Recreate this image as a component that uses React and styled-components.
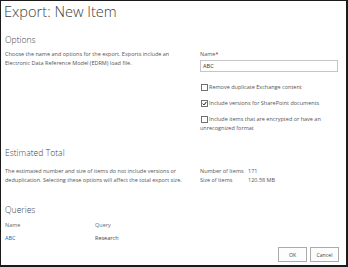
import React from 'react';
import styled, { createGlobalStyle } from 'styled-components';

const GlobalStyle = createGlobalStyle`
  html, body {
    margin: 0;
    padding: 0;
    background: #ffffff;
  }
`;

const Frame = styled.div`
  width: 348px;
  height: 267px;
  box-sizing: border-box;
  border: 1px solid #1b1b1b;
  border-right-width: 2px;
  border-bottom-width: 2px;
  padding: 0 7px 3px 4px;
  display: flex;
  flex-direction: column;
  background: #ffffff;
  font-family: "Open Sans", "Noto Sans", sans-serif;
  color: #555555;
  overflow: hidden;
`;

const Title = styled.h1`
  margin: 0 0 0 -1px;
  font-size: 14.6px;
  line-height: 20px;
  font-weight: 300;
  color: #3c3c3c;
  white-space: nowrap;
`;

const Heading = styled.h2`
  margin: ${(p) => p.$top}px 0 0;
  font-size: 8.6px;
  line-height: 10px;
  font-weight: 300;
  color: #444444;
`;

const Row = styled.div`
  margin-top: ${(p) => p.$top}px;
  display: grid;
  grid-template-columns: 195px 138px;
  align-items: start;
`;

const Text = styled.p`
  margin: 0;
  width: 186px;
  font-size: 5.5px;
  line-height: 9px;
`;

const Field = styled.div`
  display: flex;
  flex-direction: column;
`;

const Label = styled.label`
  font-size: 5.5px;
  line-height: 9px;
  color: #555555;
`;

const Star = styled.span`
  color: #c00000;
`;

const Input = styled.div`
  margin-top: 1px;
  height: 12px;
  box-sizing: border-box;
  border: 1px solid #c6c6c6;
  padding: 0 2px;
  font-size: 5.6px;
  line-height: 10px;
  color: #333333;
`;

const Options = styled.div`
  margin-top: 11px;
  display: flex;
  flex-direction: column;
  gap: 7px;
`;

const Option = styled.div`
  font-size: 5.5px;
  line-height: 9px;
  color: #555555;
`;

const Box = styled.span`
  display: inline-block;
  vertical-align: middle;
  position: relative;
  top: -0.5px;
  width: 7px;
  height: 7px;
  box-sizing: border-box;
  margin: 0 1px 0 1px;
  border: 1px solid #707070;
  background: #ffffff;

  svg {
    display: block;
    width: 5px;
    height: 5px;
  }
`;

const Stats = styled.div`
  display: grid;
  grid-template-columns: 48px auto;
  font-size: 5.5px;
  line-height: 9px;
`;

const Table = styled.div`
  margin-top: 6px;
  display: grid;
  grid-template-columns: 90px auto;
  row-gap: 4px;
  font-size: 5.5px;
  line-height: 9px;
`;

const Head = styled.span`
  color: #6a6a6a;
`;

const Link = styled.a`
  color: #0072c6;
  text-decoration: none;
`;

const Cell = styled.span`
  color: #444444;
`;

const Footer = styled.div`
  margin-top: auto;
  display: flex;
  justify-content: flex-end;
  gap: 3px;
`;

const Button = styled.button`
  width: 29px;
  height: 15px;
  padding: 0;
  border: 1px solid #ababab;
  background: #fdfdfd;
  font-family: inherit;
  font-size: 5.2px;
  color: #444444;
`;

function Checkbox({ checked }) {
  return (
    <Box>
      {checked && (
        <svg viewBox="0 0 10 10">
          <path d="M1.5 5.2 L4 7.8 L8.8 1.8" fill="none" stroke="#111" strokeWidth="2" />
        </svg>
      )}
    </Box>
  );
}

export default function App() {
  return (
    <>
      <GlobalStyle />
      <Frame>
        <Title>Export: New Item</Title>

        <Heading $top={14}>Options</Heading>
        <Row $top={5}>
          <Text>
            Choose the name and options for the export. Exports include an Electronic Data
            Reference Model (EDRM) load file.
          </Text>
          <Field>
            <Label>
              Name<Star>*</Star>
            </Label>
            <Input>ABC</Input>
            <Options>
              <Option>
                <Checkbox />
                Remove duplicate Exchange content
              </Option>
              <Option>
                <Checkbox checked />
                Include versions for SharePoint documents
              </Option>
              <Option>
                <Checkbox />
                Include items that are encrypted or have an unrecognized format
              </Option>
            </Options>
          </Field>
        </Row>

        <Heading $top={15}>Estimated Total</Heading>
        <Row $top={9}>
          <Text>
            The estimated number and size of items do not include versions or deduplication.
            Selecting these options will affect the total export size.
          </Text>
          <Stats>
            <span>Number of Items</span>
            <span>171</span>
            <span>Size of Items</span>
            <span>120.58 MB</span>
          </Stats>
        </Row>

        <Heading $top={20}>Queries</Heading>
        <Table>
          <Head>Name</Head>
          <Head>Query</Head>
          <Link href="#">ABC</Link>
          <Cell>Research</Cell>
        </Table>

        <Footer>
          <Button>OK</Button>
          <Button>Cancel</Button>
        </Footer>
      </Frame>
    </>
  );
}
